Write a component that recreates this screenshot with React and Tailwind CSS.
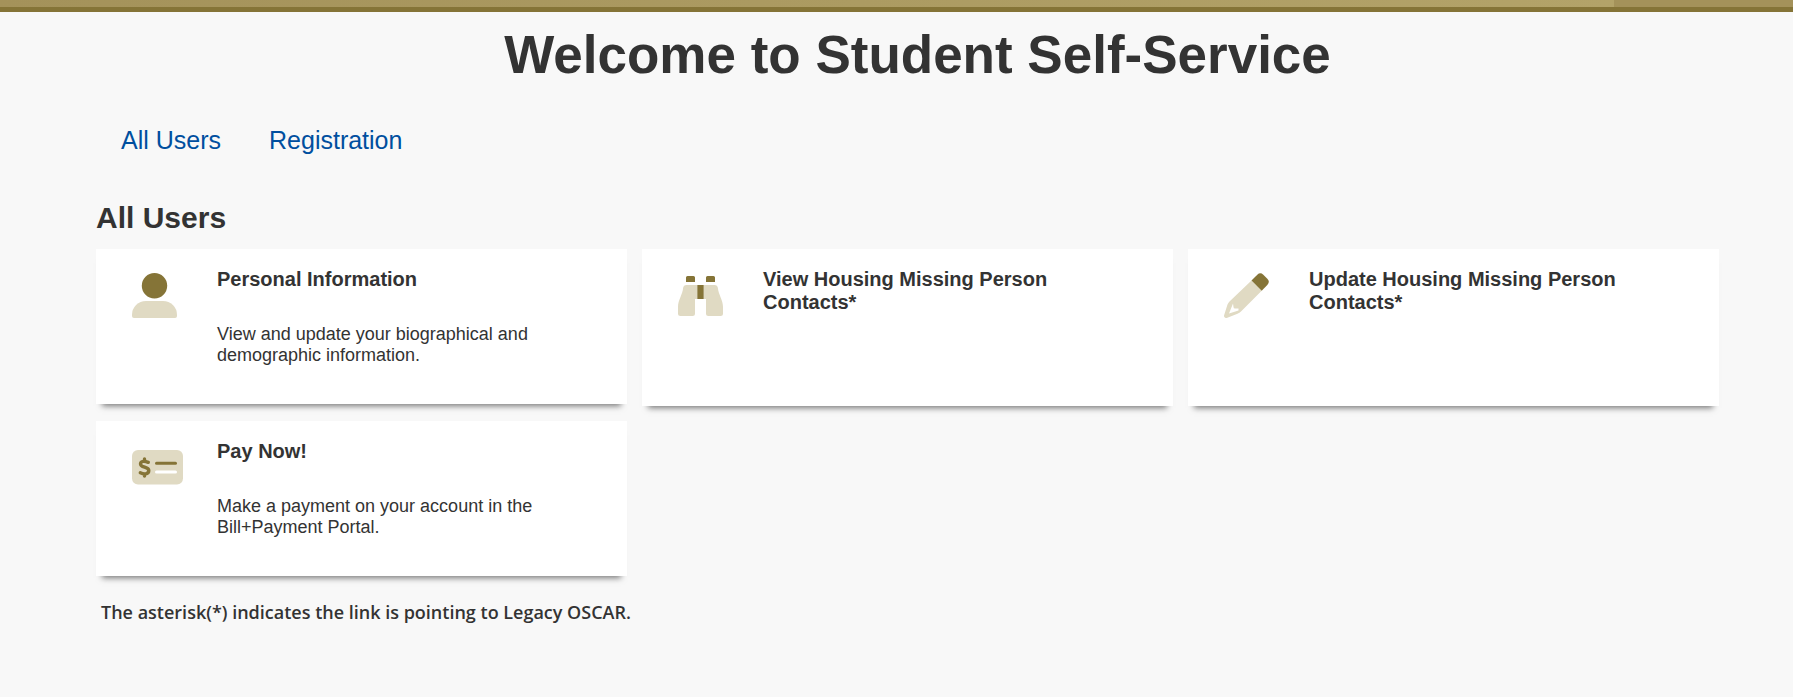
const PersonIcon = () => (
    <svg width="45" height="45" viewBox="0 0 45 45" aria-hidden="true">
        <circle cx="22.5" cy="12.7" r="12.7" fill="#857437" />
        <path d="M14 28H31A14 14 0 0 1 45 42V43A2 2 0 0 1 43 45H2A2 2 0 0 1 0 43V42A14 14 0 0 1 14 28Z" fill="#e0dac3" />
    </svg>
);

const BinocularsIcon = () => (
    <svg width="45" height="40" viewBox="0 0 45 40" aria-hidden="true">
        <path
            d="M8 9H19V23H17V37.500Q17 40 14.500 40H2.500Q0 40 0 37.500V31C0 24 4.500 19 5.200 11.500Q5.500 9 8 9ZM37 9H26V23H28V37.500Q28 40 30.500 40H42.500Q45 40 45 37.500V31C45 24 40.500 19 39.800 11.500Q39.500 9 37 9Z"
            fill="#e0dac3"
        />
        <path d="M9.500 0H15.500Q17 0 17 1.500V6H8V1.500Q8 0 9.500 0ZM29.500 0H35.500Q37 0 37 1.500V6H28V1.500Q28 0 29.500 0ZM19.300 9H25.700V23H19.300Z" fill="#857437" />
    </svg>
);

const PencilIcon = () => (
    <svg width="45" height="45" viewBox="0 0 45 45" aria-hidden="true">
        <path
            d="M27.500 7.500L37.700 17.700L17 38.500Q15.500 40 13.500 40.800L2.700 44.900C1 45.400-.400 44 .1 42.300L3.500 31.500Q4.200 29.800 5.500 28.500ZM9 30.500L5 40.500L14.500 37.500V35.500H11Q9.500 35.500 9.500 34Z"
            fill="#e0dac3"
            fillRule="evenodd"
        />
        <path d="M27.500 7.500L33.300 1.700Q36.300-1 39.300 1.700L43.300 5.700Q46.300 8.700 43.300 11.900L37.700 17.700Z" fill="#857437" />
    </svg>
);

const PaymentIcon = () => (
    <svg width="51" height="35" viewBox="0 0 51 35" aria-hidden="true">
        <rect width="51" height="34.500" rx="6" fill="#e0dac3" />
        <g fill="none" stroke="#857437" strokeWidth="3" strokeLinecap="round" strokeLinejoin="round">
            <path d="M12.500 9V11M12.500 24V26M16.300 12.300C13 11 8.700 10.600 8.500 13.800C8.300 18 17 16.400 16.800 20.600C16.600 24.800 11.500 24.300 8.300 22.700" strokeWidth="3.400" />
            <path d="M24.500 13.300H43.500" />
        </g>
        <path d="M24.500 22H43.500" stroke="#fff" strokeWidth="3" strokeLinecap="round" />
    </svg>
);

const tabs = ['All Users', 'Registration'];

const cards = [
    {
        title: 'Personal Information',
        description: 'View and update your biographical and demographic information.',
        icon: PersonIcon,
    },
    { title: 'View Housing Missing Person Contacts*', icon: BinocularsIcon },
    { title: 'Update Housing Missing Person Contacts*', icon: PencilIcon },
    {
        title: 'Pay Now!',
        description: 'Make a payment on your account in the Bill+Payment Portal.',
        icon: PaymentIcon,
    },
];

const ServiceCard = ({ card }) => {
    const Icon = card.icon;

    return (
        <a href="#" className="flex bg-white pt-[19px] pr-20 pb-[38px] pl-9 shadow-[0_8px_6px_-6px_#777]">
            <div className="w-[85px] shrink-0 pt-[5px]">
                <div className="flex h-[45px] items-center">
                    <Icon />
                </div>
            </div>
            <div className="min-w-0 flex-1">
                <h3 className="mb-[33px] text-[20px] leading-[23px] font-bold">{card.title}</h3>
                <p className="min-h-[21px] text-[18px] leading-[21px]">{card.description}</p>
            </div>
        </a>
    );
};

const App = () => {
    return (
        <div className="min-h-screen bg-[#f8f8f8] font-['Liberation_Sans',Arial,sans-serif] text-[#333]">
            <header className="flex h-3 border-b-5 border-[#857437] bg-[#a4925a]">
                <div className="w-[90%] bg-linear-to-r from-[#a4925a] to-[#b3a369]" />
            </header>

            <main className="pt-[14px] pr-[54px] pb-12 pl-24">
                <h1 className="text-center text-[53px] leading-[58px] font-bold">Welcome to Student Self-Service</h1>

                <nav className="mt-[42px] flex gap-12 pl-[25px]">
                    {tabs.map((tab) => (
                        <a key={tab} href="#" className="text-[25px] leading-7 text-[#004f9f]">
                            {tab}
                        </a>
                    ))}
                </nav>

                <section className="mt-[47px] pr-5">
                    <h2 className="text-[30px] leading-[34px] font-bold">All Users</h2>
                    <div className="mt-[14px] grid grid-cols-3 items-start gap-[15px]">
                        {cards.map((card) => (
                            <ServiceCard key={card.title} card={card} />
                        ))}
                    </div>
                </section>

                <p className="mt-6 pl-[5px] font-['Open_Sans',sans-serif] text-[18px] leading-6 font-semibold">
                    The asterisk(*) indicates the link is pointing to Legacy OSCAR.
                </p>
            </main>
        </div>
    );
};

export default App;
